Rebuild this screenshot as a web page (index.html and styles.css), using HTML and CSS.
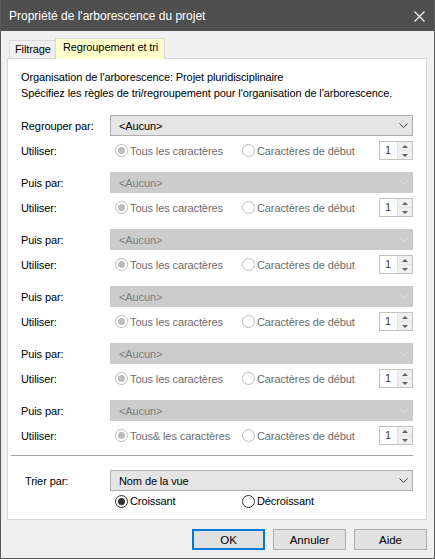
FILE: index.html
```html
<!DOCTYPE html>
<html lang="fr">
<head>
<meta charset="utf-8">
<title>Propriété de l'arborescence du projet</title>
<link rel="stylesheet" href="styles.css">
</head>
<body>
<div class="window">
  <div class="titlebar">
    <span class="title">Propriété de l'arborescence du projet</span>
    <svg class="close" width="11" height="11" viewBox="0 0 11 11"><path d="M0.5 0.5 L10.5 10.5 M10.5 0.5 L0.5 10.5" stroke="#ffffff" stroke-width="1.1" fill="none"/></svg>
  </div>
  <div class="client">
    <div class="tabs">
      <div class="tab">Filtrage</div>
      <div class="tab active">Regroupement et tri</div>
    </div>
    <div class="panel">
      <p class="intro">Organisation de l'arborescence: Projet pluridisciplinaire<br>Spécifiez les règles de tri/regroupement pour l'organisation de l'arborescence.</p>

      <div class="groups">
        <div class="group">
          <span class="label">Regrouper par:</span>
          <div class="select"><span>&lt;Aucun&gt;</span><svg class="chev" width="9" height="5" viewBox="0 0 9 5"><polyline points="0.5,0.5 4.5,4.5 8.5,0.5" fill="none" stroke="#3c3c3c" stroke-width="1"/></svg></div>
          <span class="label">Utiliser:</span>
          <div class="opts">
            <span class="radio r1 dis"><i class="dot on"></i>Tous les caractères</span>
            <span class="radio r2 dis"><i class="dot"></i>Caractères de début</span>
            <span class="spin"><span class="spin-val">1</span><span class="spin-btns"><b class="up"></b><b class="down"></b></span></span>
          </div>
        </div>

        <div class="group">
          <span class="label">Puis par:</span>
          <div class="select disabled"><span>&lt;Aucun&gt;</span><svg class="chev" width="9" height="5" viewBox="0 0 9 5"><polyline points="0.5,0.5 4.5,4.5 8.5,0.5" fill="none" stroke="#dedede" stroke-width="1"/></svg></div>
          <span class="label">Utiliser:</span>
          <div class="opts">
            <span class="radio r1 dis"><i class="dot on"></i>Tous les caractères</span>
            <span class="radio r2 dis"><i class="dot"></i>Caractères de début</span>
            <span class="spin"><span class="spin-val">1</span><span class="spin-btns"><b class="up"></b><b class="down"></b></span></span>
          </div>
        </div>

        <div class="group">
          <span class="label">Puis par:</span>
          <div class="select disabled"><span>&lt;Aucun&gt;</span><svg class="chev" width="9" height="5" viewBox="0 0 9 5"><polyline points="0.5,0.5 4.5,4.5 8.5,0.5" fill="none" stroke="#dedede" stroke-width="1"/></svg></div>
          <span class="label">Utiliser:</span>
          <div class="opts">
            <span class="radio r1 dis"><i class="dot on"></i>Tous les caractères</span>
            <span class="radio r2 dis"><i class="dot"></i>Caractères de début</span>
            <span class="spin"><span class="spin-val">1</span><span class="spin-btns"><b class="up"></b><b class="down"></b></span></span>
          </div>
        </div>

        <div class="group">
          <span class="label">Puis par:</span>
          <div class="select disabled"><span>&lt;Aucun&gt;</span><svg class="chev" width="9" height="5" viewBox="0 0 9 5"><polyline points="0.5,0.5 4.5,4.5 8.5,0.5" fill="none" stroke="#dedede" stroke-width="1"/></svg></div>
          <span class="label">Utiliser:</span>
          <div class="opts">
            <span class="radio r1 dis"><i class="dot on"></i>Tous les caractères</span>
            <span class="radio r2 dis"><i class="dot"></i>Caractères de début</span>
            <span class="spin"><span class="spin-val">1</span><span class="spin-btns"><b class="up"></b><b class="down"></b></span></span>
          </div>
        </div>

        <div class="group">
          <span class="label">Puis par:</span>
          <div class="select disabled"><span>&lt;Aucun&gt;</span><svg class="chev" width="9" height="5" viewBox="0 0 9 5"><polyline points="0.5,0.5 4.5,4.5 8.5,0.5" fill="none" stroke="#dedede" stroke-width="1"/></svg></div>
          <span class="label">Utiliser:</span>
          <div class="opts">
            <span class="radio r1 dis"><i class="dot on"></i>Tous les caractères</span>
            <span class="radio r2 dis"><i class="dot"></i>Caractères de début</span>
            <span class="spin"><span class="spin-val">1</span><span class="spin-btns"><b class="up"></b><b class="down"></b></span></span>
          </div>
        </div>

        <div class="group">
          <span class="label">Puis par:</span>
          <div class="select disabled"><span>&lt;Aucun&gt;</span><svg class="chev" width="9" height="5" viewBox="0 0 9 5"><polyline points="0.5,0.5 4.5,4.5 8.5,0.5" fill="none" stroke="#dedede" stroke-width="1"/></svg></div>
          <span class="label">Utiliser:</span>
          <div class="opts">
            <span class="radio r1 dis"><i class="dot on"></i>Tous&amp; les caractères</span>
            <span class="radio r2 dis"><i class="dot"></i>Caractères de début</span>
            <span class="spin"><span class="spin-val">1</span><span class="spin-btns"><b class="up"></b><b class="down"></b></span></span>
          </div>
        </div>
      </div>

      <div class="sep"></div>

      <div class="sort">
        <span class="label sort-label">Trier par:</span>
        <div class="select"><span>Nom de la vue</span><svg class="chev" width="9" height="5" viewBox="0 0 9 5"><polyline points="0.5,0.5 4.5,4.5 8.5,0.5" fill="none" stroke="#3c3c3c" stroke-width="1"/></svg></div>
        <span></span>
        <div class="opts sort-opts">
          <span class="radio r1"><i class="dot on"></i>Croissant</span>
          <span class="radio r2"><i class="dot"></i>Décroissant</span>
        </div>
      </div>
    </div>
    <div class="buttons">
      <button class="btn default">OK</button>
      <button class="btn">Annuler</button>
      <button class="btn">Aide</button>
    </div>
  </div>
</div>
</body>
</html>
```
FILE: styles.css
```css
* { box-sizing: border-box; }

body {
  margin: 0;
  font-family: "Liberation Sans", Arial, sans-serif;
  font-size: 11px;
  letter-spacing: -0.1px;
  color: #000;
  background: #f0f0f0;
}

.window {
  width: 435px;
  height: 559px;
  overflow: hidden;
  border: 1px solid #5a5a5a;
  border-top: none;
  background: #f0f0f0;
  display: flex;
  flex-direction: column;
}

.titlebar {
  height: 31px;
  flex: none;
  background: #4f4f4f;
  color: #fff;
  display: flex;
  align-items: center;
  justify-content: space-between;
  padding: 1px 9px 0 8px;
}

.title { font-size: 12px; letter-spacing: 0; }

.close { display: block; }

.client {
  flex: 1;
  min-height: 0;
  display: flex;
  flex-direction: column;
  padding: 7px 7px 8px 6px;
}

.tabs {
  display: flex;
  align-items: flex-end;
  height: 21px;
  flex: none;
  margin-bottom: -1px;
  padding-left: 2px;
  position: relative;
  z-index: 1;
}

.tab {
  height: 18px;
  margin-bottom: 1px;
  line-height: 17px;
  padding: 0 4px 0 5px;
  border: 1px solid #d9d9d9;
  border-bottom: none;
  background: #f0f0f0;
}

.tab.active {
  height: 21px;
  margin-bottom: 0;
  margin-left: -1px;
  padding: 0 6px 0 7px;
  line-height: 16px;
  background: #ffffcc;
}

.panel {
  flex: 1;
  min-height: 0;
  background: #fff;
  border: 1px solid #d9d9d9;
  padding: 10px 12px 0 13px;
}

.intro {
  margin: 0;
  line-height: 16px;
  white-space: nowrap;
}

.groups {
  margin-top: 14px;
  display: flex;
  flex-direction: column;
  gap: 12px;
}

.group, .sort {
  display: grid;
  grid-template-columns: 89px 303px;
  grid-template-rows: 21px 19px;
  row-gap: 5px;
  align-items: center;
}

.label { white-space: nowrap; }

.select {
  height: 21px;
  border: 1px solid #acacac;
  background: #e5e5e5;
  display: flex;
  align-items: center;
  justify-content: space-between;
  padding: 0 4px 0 8px;
}

.select.disabled {
  background: #cccccc;
  border-color: #cccccc;
  color: #7c7c7c;
}

.chev { display: block; }

.opts {
  display: flex;
  align-items: center;
  height: 19px;
  padding-left: 5px;
}

.radio {
  display: flex;
  align-items: center;
  gap: 2px;
  white-space: nowrap;
}

.radio.r1 { width: 127px; }
.radio.r2 { width: 137px; }

.dot {
  width: 13px;
  height: 13px;
  border: 1px solid #333;
  border-radius: 50%;
  background: #fff;
  display: flex;
  align-items: center;
  justify-content: center;
  flex: none;
}

.dot.on::after {
  content: "";
  width: 7px;
  height: 7px;
  border-radius: 50%;
  background: #333;
}

.radio.dis { color: #6d6d6d; }
.radio.dis .dot { border-color: #bcbcbc; }
.radio.dis .dot.on::after { background: #bcbcbc; }

.spin {
  width: 34px;
  height: 19px;
  border: 1px solid #c2c2c2;
  background: #fff;
  display: flex;
}

.spin-val {
  flex: 1;
  padding-left: 5px;
  line-height: 17px;
  color: #3a3a3a;
}

.spin-btns {
  width: 15px;
  display: flex;
  flex-direction: column;
  border-left: 1px solid #e3e3e3;
  background: #f0f0f0;
}

.spin-btns b {
  flex: 1;
  display: flex;
  align-items: center;
  justify-content: center;
}

.spin-btns .up { border-bottom: 1px solid #e3e3e3; }

.spin-btns .up::after {
  content: "";
  border-left: 3px solid transparent;
  border-right: 3px solid transparent;
  border-bottom: 3px solid #606060;
}

.spin-btns .down::after {
  content: "";
  border-left: 3px solid transparent;
  border-right: 3px solid transparent;
  border-top: 3px solid #606060;
}

.sep {
  height: 1px;
  background: #a0a0a0;
  margin: 10px 0 0 -10px;
  width: 402px;
}

.sort {
  margin-top: 14px;
  grid-template-rows: 21px 14px;
  row-gap: 3px;
}

.sort-label { padding-left: 4px; }

.sort-opts { height: 14px; }

.buttons {
  display: flex;
  flex: none;
  justify-content: flex-end;
  gap: 8px;
  margin-top: 9px;
}

.btn {
  width: 73px;
  height: 21px;
  border: 1px solid #adadad;
  background: #e1e1e1;
  font-family: inherit;
  font-size: 11.5px;
  color: #000;
  padding: 0;
}

.btn.default { border: 2px solid #0078d7; }
```
